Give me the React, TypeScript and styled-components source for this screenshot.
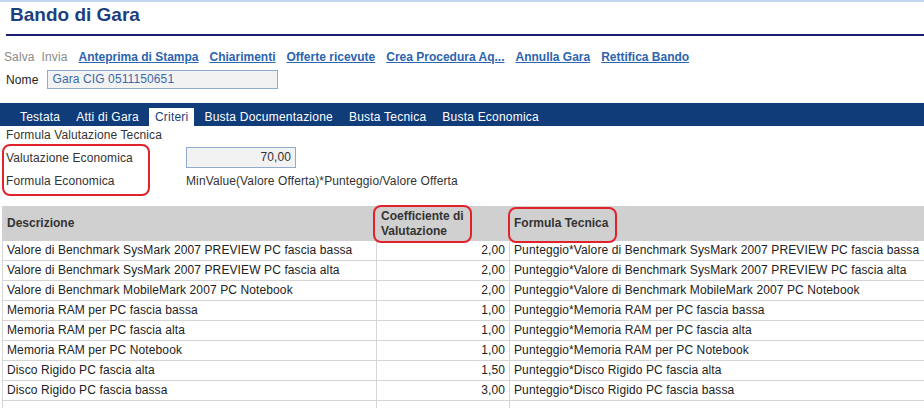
import styled, { createGlobalStyle } from 'styled-components';

const GlobalStyle = createGlobalStyle`
  html, body {
    margin: 0;
    padding: 0;
    overflow: hidden;
    background: #fff;
  }
  body {
    font-family: 'Liberation Sans', Arial, sans-serif;
    font-size: 12px;
    letter-spacing: 0.11px;
    color: #222;
  }
`;

const Page = styled.div`
  width: 924px;
  border-top: 2px solid #c3d7ef;
`;

const TitleBar = styled.div`
  margin-left: 6px;
  height: 32px;
  border-bottom: 2px solid #1b1b6f;
  padding-left: 4px;
  box-sizing: content-box;
`;

const Title = styled.h1`
  margin: 0;
  padding-top: 1px;
  font-size: 19px;
  line-height: 24px;
  font-weight: bold;
  letter-spacing: 0;
  color: #1c3f7f;
`;

const Toolbar = styled.div`
  display: flex;
  gap: 11px;
  margin: 13px 0 0 4px;
  line-height: 16px;
`;

const Action = styled.span<{ $disabled?: boolean }>`
  color: ${(p) => (p.$disabled ? '#8a8a8a' : '#2c64ae')};
  font-weight: ${(p) => (p.$disabled ? 'normal' : 'bold')};
  text-decoration: ${(p) => (p.$disabled ? 'none' : 'underline')};
  letter-spacing: ${(p) => (p.$disabled ? '0.11px' : '0')};
  cursor: pointer;
`;

const NameRow = styled.div`
  display: flex;
  align-items: center;
  gap: 9px;
  margin: 5px 0 0 6px;
  height: 19px;
`;

const Field = styled.div<{ $width: number; $align?: string; $tone?: string }>`
  box-sizing: border-box;
  width: ${(p) => p.$width}px;
  height: 100%;
  border: 1px solid #92aad0;
  background: #f2f2f2;
  color: ${(p) => p.$tone ?? '#333'};
  text-align: ${(p) => p.$align ?? 'left'};
  padding: 0 4px;
  line-height: 17px;
`;

const TabBar = styled.div`
  display: flex;
  align-items: flex-end;
  gap: 4px;
  margin-top: 14px;
  height: 23px;
  padding-left: 14px;
  background: #103c7a;
`;

const Tab = styled.div<{ $active?: boolean }>`
  height: 18px;
  line-height: 18px;
  padding: 0 6px;
  letter-spacing: 0.22px;
  color: ${(p) => (p.$active ? '#1c3e78' : '#fff')};
  background: ${(p) => (p.$active ? '#fff' : 'transparent')};
  cursor: pointer;
`;

const SectionTitle = styled.div`
  padding-left: 6px;
  line-height: 18px;
  color: #333;
`;

const FormBlock = styled.div`
  display: flex;
  align-items: flex-start;
  margin-left: 2px;
`;

const LabelBox = styled.div`
  box-sizing: border-box;
  width: 148px;
  border: 2px solid #e2222b;
  border-radius: 8px;
  padding: 0 0 2px 2px;
`;

const FieldColumn = styled.div`
  margin: 2px 0 0 36px;
`;

const FormRow = styled.div`
  display: flex;
  align-items: center;
  height: 23px;
  color: #333;
`;

const Grid = styled.table`
  margin: 10px 0 0 2px;
  width: 960px;
  border-collapse: collapse;
  table-layout: fixed;
`;

const HeadCell = styled.th<{ $align?: string }>`
  height: 33px;
  padding: 0 4px;
  background: #d0d0d0;
  border: 1px solid #d0d0d0;
  color: #333;
  font-weight: bold;
  letter-spacing: 0;
  line-height: 15px;
  text-align: ${(p) => p.$align ?? 'left'};
  vertical-align: middle;
`;

const Cell = styled.td<{ $align?: string }>`
  height: 19px;
  padding: 0 4px;
  border: 1px solid #d6d6d6;
  line-height: 19px;
  color: #222;
  white-space: nowrap;
  overflow: hidden;
  text-align: ${(p) => p.$align ?? 'left'};
`;

const Marked = styled.span<{ $inset: string }>`
  position: relative;
  display: inline-block;

  &::after {
    content: '';
    position: absolute;
    inset: ${(p) => p.$inset};
    border: 2px solid #e2222b;
    border-radius: 8px;
  }
`;

const actions = [
  'Anteprima di Stampa',
  'Chiarimenti',
  'Offerte ricevute',
  'Crea Procedura Aq...',
  'Annulla Gara',
  'Rettifica Bando',
];

const tabs = ['Testata', 'Atti di Gara', 'Criteri', 'Busta Documentazione', 'Busta Tecnica', 'Busta Economica'];

const rows = [
  ['Valore di Benchmark SysMark 2007 PREVIEW PC fascia bassa', '2,00'],
  ['Valore di Benchmark SysMark 2007 PREVIEW PC fascia alta', '2,00'],
  ['Valore di Benchmark MobileMark 2007 PC Notebook', '2,00'],
  ['Memoria RAM per PC fascia bassa', '1,00'],
  ['Memoria RAM per PC fascia alta', '1,00'],
  ['Memoria RAM per PC Notebook', '1,00'],
  ['Disco Rigido PC fascia alta', '1,50'],
  ['Disco Rigido PC fascia bassa', '3,00'],
];

export default function App() {
  return (
    <Page>
      <GlobalStyle />
      <TitleBar>
        <Title>Bando di Gara</Title>
      </TitleBar>

      <Toolbar>
        <Action $disabled style={{ marginRight: -4 }}>Salva</Action>
        <Action $disabled>Invia</Action>
        {actions.map((a) => (
          <Action key={a}>{a}</Action>
        ))}
      </Toolbar>

      <NameRow>
        <span>Nome</span>
        <Field $width={231} $tone="#3a6aa8">Gara CIG 0511150651</Field>
      </NameRow>

      <TabBar>
        {tabs.map((t) => (
          <Tab key={t} $active={t === 'Criteri'}>
            {t}
          </Tab>
        ))}
      </TabBar>

      <SectionTitle>Formula Valutazione Tecnica</SectionTitle>

      <FormBlock>
        <LabelBox>
          <FormRow>Valutazione Economica</FormRow>
          <FormRow>Formula Economica</FormRow>
        </LabelBox>
        <FieldColumn>
          <FormRow>
            <Field $width={110} $align="right" style={{ height: 21, lineHeight: '19px' }}>
              70,00
            </Field>
          </FormRow>
          <FormRow>MinValue(Valore Offerta)*Punteggio/Valore Offerta</FormRow>
        </FieldColumn>
      </FormBlock>

      <Grid>
        <colgroup>
          <col style={{ width: 374 }} />
          <col style={{ width: 133 }} />
          <col />
        </colgroup>
        <thead>
          <tr>
            <HeadCell>Descrizione</HeadCell>
            <HeadCell>
              <Marked $inset="-4px -8px -4px -8px">
                Coefficiente di
                <br />
                Valutazione
              </Marked>
            </HeadCell>
            <HeadCell>
              <Marked $inset="-9px -9px -12px -6px">Formula Tecnica</Marked>
            </HeadCell>
          </tr>
        </thead>
        <tbody>
          {rows.map(([desc, coeff]) => (
            <tr key={desc}>
              <Cell>{desc}</Cell>
              <Cell $align="right">{coeff}</Cell>
              <Cell>Punteggio*{desc}</Cell>
            </tr>
          ))}
          <tr>
            <Cell>&nbsp;</Cell>
            <Cell>&nbsp;</Cell>
            <Cell>&nbsp;</Cell>
          </tr>
        </tbody>
      </Grid>
    </Page>
  );
}
